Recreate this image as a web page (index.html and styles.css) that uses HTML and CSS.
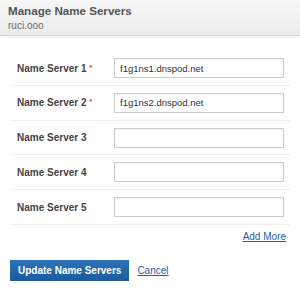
FILE: index.html
```html
<!DOCTYPE html>
<html lang="en">
<head>
  <meta charset="UTF-8" />
  <title>Manage Name Servers</title>
  <link rel="stylesheet" href="styles.css">
</head>
<body>

  <div class="header">
    <div class="title">Manage Name Servers</div>
    <div class="domain">ruci.ooo</div>
  </div>

  <form class="ns-form">
    <div class="ns-row">
      <label>Name Server 1 <span class="req">*</span></label>
      <input type="text" value="f1g1ns1.dnspod.net" />
    </div>
    <div class="ns-row">
      <label>Name Server 2 <span class="req">*</span></label>
      <input type="text" value="f1g1ns2.dnspod.net" />
    </div>
    <div class="ns-row">
      <label>Name Server 3</label>
      <input type="text" />
    </div>
    <div class="ns-row">
      <label>Name Server 4</label>
      <input type="text" />
    </div>
    <div class="ns-row">
      <label>Name Server 5</label>
      <input type="text" />
    </div>

    <div class="add-more"><a href="#">Add More</a></div>

    <div class="actions">
      <button type="button" class="update-btn">Update Name Servers</button>
      <a href="#" class="cancel">Cancel</a>
    </div>
  </form>

</body>
</html>
```

FILE: styles.css
```css
* {
  margin: 0;
  padding: 0;
  box-sizing: border-box;
  font-family: 'Liberation Sans', Arial, sans-serif;
}

body {
  width: 300px;
  background: #fff;
  color: #444;
}

.header {
  height: 36px;
  padding: 4px 8px 0;
  background: linear-gradient(#f7f7f7, #ebebeb);
  border-bottom: 1px solid #d4d4d4;
  box-shadow: 0 1px 2px rgba(0, 0, 0, 0.08);
}

.title {
  font-size: 11.6px;
  font-weight: bold;
  color: #555;
  line-height: 13px;
}

.domain {
  margin-top: 3px;
  font-size: 10px;
  color: #6a6a6a;
  line-height: 12px;
}

.ns-form {
  padding: 15px 10px 0;
}

.ns-row {
  display: flex;
  align-items: center;
  padding: 7px 0 6.75px 7px;
  border-bottom: 1px solid #efefef;
}

.ns-row label {
  width: 97px;
  font-size: 10px;
  font-weight: bold;
  color: #444;
}

.req {
  color: #d33;
  font-size: 8px;
  vertical-align: 2px;
}

.ns-row input {
  width: 170px;
  height: 20px;
  padding: 0 5px;
  border: 1px solid #ccc;
  box-shadow: inset 0 1px 1px rgba(0, 0, 0, 0.05);
  font-size: 9.5px;
  color: #333;
}

.add-more {
  margin-top: 6px;
  padding-right: 4px;
  text-align: right;
  font-size: 10px;
  line-height: 12px;
}

a {
  color: #2a5d9a;
}

.actions {
  display: flex;
  align-items: center;
  gap: 8px;
  margin-top: 17px;
}

.update-btn {
  height: 21px;
  padding: 0 8px;
  border: none;
  background: linear-gradient(#2b72b8, #1b5c9c);
  color: #fff;
  font-size: 10px;
  font-weight: bold;
}

.cancel {
  font-size: 10px;
}
```
